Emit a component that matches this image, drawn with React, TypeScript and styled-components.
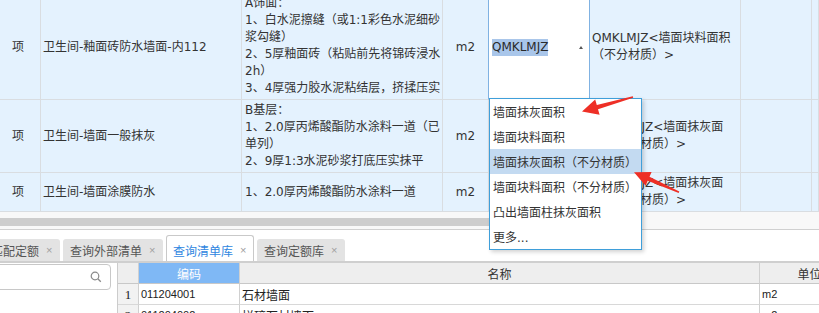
import React from "react";
import styled, { createGlobalStyle } from "styled-components";

const GlobalStyle = createGlobalStyle`
  html, body { margin: 0; padding: 0; background: #fff; }
  body {
    width: 819px; height: 313px; overflow: hidden;
    font-family: "DejaVu Sans", "Noto Sans CJK SC", sans-serif;
  }
`;

const Page = styled.div`
  position: relative;
  width: 819px;
  height: 313px;
  overflow: hidden;
  background: #fff;
  display: flex;
  flex-direction: column;
`;

/* ---------- top grid ---------- */
const TopGrid = styled.div`
  flex: none;
  margin-top: -5px;
  display: grid;
  grid-template-columns: 41px 201px 201px 46px 101px 151px 71px 1fr;
  grid-template-rows: 105px 73px 39px;
`;

const Cell = styled.div<{ $center?: boolean; $pad?: number }>`
  box-sizing: border-box;
  min-width: 0;
  background: #e4f2fe;
  border-right: 1px solid #d9dde1;
  border-bottom: 1px solid #d9dde1;
  display: flex;
  align-items: center;
  justify-content: ${(p) => (p.$center ? "center" : "flex-start")};
  padding: 0 ${(p) => p.$pad ?? 2}px;
  font-size: 12px;
  line-height: 17px;
  color: #333;
  overflow: hidden;
  white-space: nowrap;
`;

const EditorCell = styled(Cell)`
  background: #fff;
  margin-left: -1px;
  border-left: 1px solid #80b2e2;
  border-right-color: #80b2e2;
  justify-content: space-between;
  padding: 0 6px 0 3px;
`;

const Selected = styled.span`
  background: #a9c6ea;
  color: #2a2a2a;
`;

const UpCaret = styled.span`
  width: 0;
  height: 0;
  border-left: 2px solid transparent;
  border-right: 2px solid transparent;
  border-bottom: 3px solid #555;
`;

const TextBlock = styled.div<{ $shift?: number }>`
  margin-top: ${(p) => p.$shift ?? 0}px;
`;

const Line = styled.div``;

/* ---------- scrollbar ---------- */
const HScroll = styled.div`
  flex: none;
  height: 18px;
  box-sizing: border-box;
  background: #f8f8f8;
  border-bottom: 1px solid #d0d0d0;
  padding-top: 6px;
`;

const Thumb = styled.div`
  width: 600px;
  height: 8px;
  background: #cdcdcd;
`;

/* ---------- tabs ---------- */
const TabBar = styled.div`
  flex: none;
  height: 33px;
  box-sizing: border-box;
  border-bottom: 2px solid #cfcfcf;
  display: flex;
  align-items: flex-end;
  gap: 3px;
  margin-left: -16px;
  font-family: "Noto Sans CJK SC", sans-serif;
`;

const Tab = styled.div<{ $active?: boolean }>`
  box-sizing: border-box;
  height: ${(p) => (p.$active ? 26 : 22)}px;
  padding: ${(p) => (p.$active ? "3px 7px 0 6px" : "0 8px 0 7px")};
  display: flex;
  align-items: center;
  gap: 7px;
  font-size: 12px;
  color: ${(p) => (p.$active ? "#2f86df" : "#555")};
  background: ${(p) => (p.$active ? "#fff" : "#e3e3e3")};
  border: ${(p) => (p.$active ? "1px solid #c9c9c9" : "none")};
  border-bottom: none;
  border-radius: 3px 3px 0 0;
  white-space: nowrap;
`;

const Close = styled.span`
  font-family: "Liberation Sans", sans-serif;
  font-size: 11px;
  color: #a0a0a0;
  width: 6px;
`;

/* ---------- lower area ---------- */
const Lower = styled.div`
  flex: 1;
  display: flex;
  min-height: 0;
`;

const LeftPanel = styled.div`
  flex: none;
  width: 118px;
  box-sizing: border-box;
  border-right: 1px solid #cccccc;
  padding-top: 1px;
  overflow: hidden;
`;

const SearchBox = styled.div`
  margin-left: -6px;
  width: 117px;
  height: 26px;
  box-sizing: border-box;
  border: 1px solid #c8c8c8;
  border-radius: 4px;
  display: flex;
  align-items: center;
  justify-content: flex-end;
  padding-right: 8px;
`;

const ResultGrid = styled.div`
  display: grid;
  grid-template-columns: 21px 101px 520px 100px;
  grid-auto-rows: 21px;
  align-content: start;
`;

const HeadCell = styled.div<{ $hl?: boolean }>`
  box-sizing: border-box;
  background: ${(p) => (p.$hl ? "#7fb8f5" : "#eeeeee")};
  color: ${(p) => (p.$hl ? "#fff" : "#333")};
  border-right: 1px solid #d0d0d0;
  border-bottom: 1px solid #c8c8c8;
  display: flex;
  align-items: center;
  justify-content: center;
  font-family: "Noto Sans CJK SC", sans-serif;
  font-size: 12px;
  white-space: nowrap;
  overflow: hidden;
`;

const RowNum = styled.div`
  box-sizing: border-box;
  background: #f2f2f2;
  border-right: 1px solid #d0d0d0;
  border-bottom: 1px solid #d8d8d8;
  display: flex;
  align-items: center;
  justify-content: center;
  font-family: "Liberation Serif", serif;
  font-size: 13px;
  color: #222;
  padding-top: 2px;
`;

const DataCell = styled.div<{ $mono?: boolean }>`
  box-sizing: border-box;
  border-right: 1px solid #d0d0d0;
  border-bottom: 1px solid #d8d8d8;
  display: flex;
  align-items: center;
  padding: 0 2px;
  font-family: ${(p) =>
    p.$mono ? `"Liberation Sans", sans-serif` : `"Noto Sans CJK SC", sans-serif`};
  font-size: ${(p) => (p.$mono ? 11 : 12)}px;
  color: #222;
  white-space: nowrap;
  overflow: hidden;
`;

/* ---------- dropdown overlay ---------- */
const Dropdown = styled.div`
  position: absolute;
  left: 489px;
  top: 98px;
  width: 153px;
  height: 152px;
  box-sizing: border-box;
  border: 1px solid #3f9fda;
  background: #fff;
  box-shadow: 2px 2px 4px rgba(0, 0, 0, 0.18);
`;

const Option = styled.div<{ $hl?: boolean }>`
  height: 25px;
  display: flex;
  align-items: center;
  padding-left: 3px;
  font-size: 12px;
  color: #333;
  background: ${(p) => (p.$hl ? "#c3daf1" : "transparent")};
  white-space: nowrap;
`;

const Overlay = styled.svg`
  position: absolute;
  left: 0;
  top: 0;
  pointer-events: none;
`;

const rows = [
  {
    kind: "项",
    name: "卫生间-釉面砖防水墙面-内112",
    desc: [
      "A饰面：",
      "1、白水泥擦缝（或1:1彩色水泥细砂",
      "浆勾缝）",
      "2、5厚釉面砖（粘贴前先将锦砖浸水",
      "2h）",
      "3、4厚强力胶水泥粘结层，挤揉压实",
    ],
    shift: -2,
    unit: "m2",
    code: "QMKLMJZ",
    expr: ["QMKLMJZ<墙面块料面积", "（不分材质）>"],
    editing: true,
  },
  {
    kind: "项",
    name: "卫生间-墙面一般抹灰",
    desc: ["B基层：", "1、2.0厚丙烯酸酯防水涂料一道（已", "单列）", "2、9厚1:3水泥砂浆打底压实抹平"],
    shift: 0,
    unit: "m2",
    code: "QMMHMJZ",
    expr: ["QMMHMJZ<墙面抹灰面", "积（不分材质）>"],
    editing: false,
  },
  {
    kind: "项",
    name: "卫生间-墙面涂膜防水",
    desc: ["1、2.0厚丙烯酸酯防水涂料一道"],
    shift: 0,
    unit: "m2",
    code: "QMMHMJZ",
    expr: ["QMMHMJZ<墙面抹灰面", "积（不分材质）>"],
    editing: false,
  },
];

const tabs = [
  { label: "匹配定额" },
  { label: "查询外部清单" },
  { label: "查询清单库", active: true },
  { label: "查询定额库" },
];

const options = [
  "墙面抹灰面积",
  "墙面块料面积",
  "墙面抹灰面积（不分材质）",
  "墙面块料面积（不分材质）",
  "凸出墙面柱抹灰面积",
  "更多...",
];

const results = [
  { n: "1", code: "011204001", name: "石材墙面", unit: "m2" },
  { n: "2", code: "011204002", name: "拼碎石材墙面", unit: "m2" },
];

export default function App() {
  return (
    <Page>
      <GlobalStyle />
      <TopGrid>
        {rows.map((r, i) => (
          <React.Fragment key={i}>
            <Cell $center style={{ paddingRight: 6 }}>{r.kind}</Cell>
            <Cell>{r.name}</Cell>
            <Cell $pad={3}>
              <TextBlock $shift={r.shift}>
                {r.desc.map((l, j) => (
                  <Line key={j}>{l}</Line>
                ))}
              </TextBlock>
            </Cell>
            <Cell $center>{r.unit}</Cell>
            {r.editing ? (
              <EditorCell>
                <Selected>{r.code}</Selected>
                <UpCaret />
              </EditorCell>
            ) : (
              <Cell>{r.code}</Cell>
            )}
            <Cell>
              <TextBlock>
                {r.expr.map((l, j) => (
                  <Line key={j}>{l}</Line>
                ))}
              </TextBlock>
            </Cell>
            <Cell />
            <Cell />
          </React.Fragment>
        ))}
      </TopGrid>

      <HScroll>
        <Thumb />
      </HScroll>

      <TabBar>
        {tabs.map((t) => (
          <Tab key={t.label} $active={t.active}>
            <span>{t.label}</span>
            <Close>×</Close>
          </Tab>
        ))}
      </TabBar>

      <Lower>
        <LeftPanel>
          <SearchBox>
            <svg width="12" height="12" viewBox="0 0 12 12">
              <circle cx="5" cy="5" r="3.8" fill="none" stroke="#8a8a8a" strokeWidth="1.2" />
              <line x1="7.8" y1="7.8" x2="10.8" y2="10.8" stroke="#8a8a8a" strokeWidth="1.3" />
            </svg>
          </SearchBox>
        </LeftPanel>
        <ResultGrid>
          <HeadCell />
          <HeadCell $hl>编码</HeadCell>
          <HeadCell>名称</HeadCell>
          <HeadCell>单位</HeadCell>
          {results.map((r) => (
            <React.Fragment key={r.n}>
              <RowNum>{r.n}</RowNum>
              <DataCell $mono>{r.code}</DataCell>
              <DataCell>{r.name}</DataCell>
              <DataCell $mono>{r.unit}</DataCell>
            </React.Fragment>
          ))}
        </ResultGrid>
      </Lower>

      <Dropdown>
        {options.map((o, i) => (
          <Option key={o} $hl={i === 2}>
            {o}
          </Option>
        ))}
      </Dropdown>

      <Overlay width="819" height="313" viewBox="0 0 819 313">
        <polygon
          fill="#ee2f26"
          points="632.8,96.2 596.8,105 595.2,99.4 582,111.5 599.6,114.8 598,109.2 633.2,97.8"
        />
        <polygon
          fill="#ee2f26"
          points="679.3,191.6 649.5,176.8 651.6,171.9 634,172.3 645.6,185.7 647.7,180.8 678.7,193"
        />
      </Overlay>
    </Page>
  );
}
